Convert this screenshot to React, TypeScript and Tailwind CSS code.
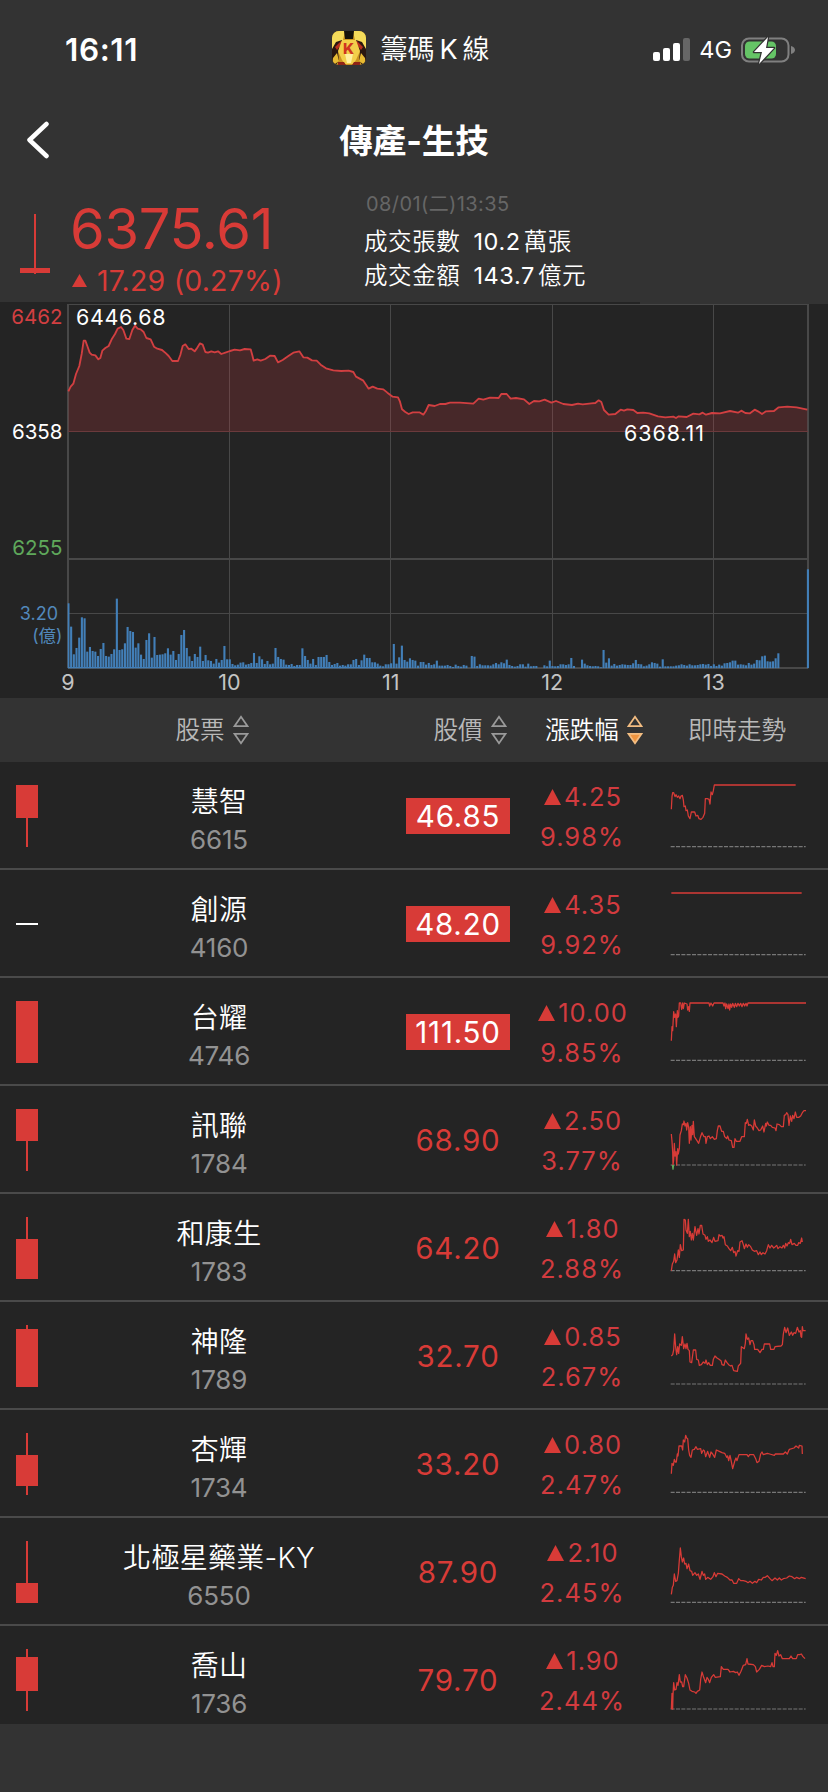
import React from 'react';

interface Candle {
  wick?: [number, number];
  body?: [number, number];
}

interface Stock {
  name: string;
  code: string;
  price: string;
  change: string;
  percent: string;
  limitUp?: boolean;
  candle: Candle;
  trend: {
    origin: [number, number];
    base: number;
    points: string;
    below?: string;
  };
}

const stocks: Stock[] = [
  {
    name: '慧智', code: '6615', price: '46.85', change: '4.25', percent: '9.98%', limitUp: true,
    candle: { body: [23, 56], wick: [56, 85] },
    trend: {
      origin: [804, 36], base: 290,
      points: '814,178 816,140 818,128 821,128 825,140 828,134 832,142 836,138 840,146 843,138 847,136 850,150 852,170 856,168 858,182 862,180 865,198 870,206 874,186 884,186 888,198 893,196 897,206 903,208 909,202 914,190 916,146 922,146 927,148 930,162 933,126 937,134 940,122 943,105 1187,105',
    },
  },
  {
    name: '創源', code: '4160', price: '48.20', change: '4.35', percent: '9.92%', limitUp: true,
    candle: {},
    trend: { origin: [804, 360], base: 614, points: '814,429 1205,429' },
  },
  {
    name: '台耀', code: '4746', price: '111.50', change: '10.00', percent: '9.85%', limitUp: true,
    candle: { body: [23, 85] },
    trend: {
      origin: [804, 684], base: 931,
      points: '814,872 816,830 818,842 821,785 824,802 827,792 829,830 832,782 834,802 836,798 838,759 842,759 845,778 848,759 850,776 853,759 861,762 863,780 866,770 868,784 870,759 927,759 929,768 933,759 938,768 942,759 969,759 972,768 975,759 977,776 980,762 984,776 987,762 989,780 992,762 995,772 998,760 1003,772 1006,760 1010,770 1014,760 1018,768 1022,760 1026,770 1030,760 1034,768 1038,760 1041,768 1044,759 1218,759',
    },
  },
  {
    name: '訊聯', code: '1784', price: '68.90', change: '2.50', percent: '3.77%',
    candle: { body: [23, 55], wick: [55, 85] },
    trend: {
      origin: [84, 18], base: 255, below: '97,255 99,269 101,255',
      points: '94,162 96,184 98,215 99,255 101,240 103,190 105,228 108,215 110,255 113,206 115,222 118,206 120,165 124,152 127,132 130,134 132,123 135,138 138,130 140,150 143,128 146,142 148,190 151,140 153,180 156,136 158,164 160,124 163,170 167,176 171,182 176,190 181,172 186,158 192,170 196,170 198,190 202,170 207,168 211,176 217,170 223,178 229,176 232,152 235,138 240,138 245,154 250,154 254,170 260,176 263,168 267,180 274,182 278,202 282,202 285,176 289,184 300,184 305,170 313,170 316,128 319,130 322,118 326,136 330,134 335,138 340,150 343,120 347,138 352,144 357,152 362,150 368,138 372,156 377,130 379,138 382,126 387,136 392,136 397,142 405,144 408,152 411,132 418,134 424,140 430,140 433,106 437,104 440,98 444,104 447,136 451,108 455,124 458,106 462,116 466,96 470,112 477,112 482,108 487,98 492,92 498,92',
    },
  },
  {
    name: '和康生', code: '1783', price: '64.20', change: '1.80', percent: '2.88%',
    candle: { body: [45, 85], wick: [23, 45] },
    trend: {
      origin: [84, 342], base: 572,
      points: '94,572 97,552 101,544 104,522 107,548 111,540 115,510 118,532 121,494 125,512 130,510 132,418 136,420 138,450 142,460 145,418 148,470 151,454 154,480 157,460 160,480 165,440 170,466 174,446 177,462 181,436 185,436 189,462 195,466 198,478 202,470 205,484 210,480 216,488 221,472 225,484 234,482 237,464 241,468 246,466 249,474 252,470 256,494 262,498 267,506 272,512 277,502 281,518 285,514 288,528 293,512 297,514 300,486 306,482 310,494 313,506 318,492 322,502 326,494 332,500 337,510 343,514 350,512 355,524 360,516 364,524 369,518 375,522 380,512 385,494 390,504 395,496 401,504 406,500 410,496 414,506 420,500 426,504 430,496 434,504 437,490 441,498 445,488 449,490 452,478 456,494 463,490 468,496 473,496 476,488 481,490 485,474 487,486',
    },
  },
  {
    name: '神隆', code: '1789', price: '32.70', change: '0.85', percent: '2.67%',
    candle: { body: [27, 85], wick: [23, 27] },
    trend: {
      origin: [84, 666], base: 912,
      points: '94,828 98,824 101,810 104,762 107,802 110,824 113,800 116,820 119,792 124,796 127,770 131,806 135,792 138,806 141,790 144,808 148,812 150,846 155,848 160,810 167,810 170,838 175,840 178,856 184,854 190,846 195,850 198,840 202,854 206,848 211,856 217,856 220,838 225,828 231,834 237,838 243,842 246,854 252,856 256,840 261,848 266,854 272,858 276,856 281,872 292,874 295,858 302,850 304,800 313,806 316,790 318,762 322,778 326,774 330,794 333,782 338,782 342,794 344,808 353,808 360,818 366,808 370,808 373,792 389,792 392,808 402,808 405,800 423,798 427,794 430,762 434,742 438,758 443,744 448,766 454,756 458,766 462,758 467,760 472,742 477,756 481,752 483,770 485,772 487,740 489,752 497,752',
    },
  },
  {
    name: '杏輝', code: '1734', price: '33.20', change: '0.80', percent: '2.47%',
    candle: { body: [45, 76], wick: [23, 85] },
    trend: {
      origin: [84, 30], base: 277,
      points: '94,221 96,190 100,196 103,178 106,186 109,186 112,162 114,168 117,138 125,138 128,150 130,120 134,126 137,106 140,114 143,116 146,150 149,166 153,172 157,150 163,148 168,140 172,148 182,146 185,160 190,150 193,152 197,170 203,154 209,172 213,156 218,162 224,172 229,150 238,154 246,158 254,160 260,172 263,168 266,182 270,166 273,180 278,206 284,184 288,174 291,182 297,164 321,164 325,170 329,164 341,164 347,176 351,188 357,184 362,162 366,156 370,164 382,160 389,162 403,166 406,162 430,162 436,156 442,162 448,148 462,144 468,138 476,144 478,136 486,138 487,162',
    },
  },
  {
    name: '北極星藥業-KY', code: '6550', price: '87.90', change: '2.10', percent: '2.45%',
    candle: { body: [65, 85], wick: [23, 65] },
    trend: {
      origin: [84, 354], base: 607,
      points: '94,583 97,562 100,556 103,522 107,544 111,542 115,520 118,480 121,444 124,470 127,486 131,474 134,492 138,490 141,506 146,492 150,512 155,514 158,526 165,518 170,526 175,522 180,538 186,514 190,526 194,522 197,538 203,532 212,538 219,530 223,518 228,530 233,520 246,522 254,528 262,532 270,540 276,540 281,550 290,550 296,536 302,542 310,542 318,544 324,548 330,544 337,550 345,544 350,548 356,538 364,540 370,532 376,532 382,527 390,536 396,542 405,534 412,540 418,534 424,540 430,536 440,534 448,528 456,530 464,536 470,532 478,536 484,532 497,536',
    },
  },
  {
    name: '喬山', code: '1736', price: '79.70', change: '1.90', percent: '2.44%',
    candle: { body: [31, 65], wick: [23, 85] },
    trend: {
      origin: [84, 678], base: 927,
      points: '94,928 96,880 98,928 99,886 101,848 104,870 108,868 111,848 114,856 118,824 121,846 125,846 128,860 131,860 136,824 141,834 146,850 150,870 156,874 164,876 168,880 172,874 179,870 182,838 186,816 191,832 197,848 201,832 205,838 209,848 214,832 221,824 226,832 241,830 244,800 250,808 264,808 270,816 280,814 287,818 292,816 297,826 303,814 310,796 317,794 321,776 324,792 340,794 346,800 350,816 358,808 365,796 373,800 384,798 392,800 396,788 399,800 403,800 405,760 409,766 413,752 417,768 422,764 427,776 448,776 453,768 458,776 469,776 473,764 479,764 484,762 489,770 495,776',
    },
  },
];

// Index line, plotted at three units per pixel
const indexLine =
  '205,304 212,290 220,281 228,252 238,228 245,192 251,152 256,152 262,168 269,188 275,194 286,196 295,208 301,204 307,182 316,174 326,168 336,146 345,132 353,116 363,111 370,120 379,146 388,147 397,120 405,107 413,116 422,118 431,126 439,144 452,148 462,170 472,176 486,180 498,190 506,198 517,213 534,213 541,195 548,168 556,163 566,177 574,176 584,184 590,176 600,160 608,164 616,186 624,188 634,184 644,187 654,184 664,192 676,188 690,183 704,179 720,181 734,177 752,178 757,196 761,212 772,208 782,212 796,207 810,197 824,198 834,217 848,210 864,199 880,188 898,184 910,202 922,203 936,211 950,212 962,224 978,235 1000,241 1024,243 1046,242 1060,246 1068,260 1090,272 1106,296 1118,290 1132,296 1150,298 1162,308 1178,320 1194,322 1200,335 1206,358 1216,366 1226,372 1238,367 1258,367 1270,374 1278,362 1286,345 1304,348 1320,342 1336,342 1350,338 1380,338 1420,341 1436,326 1450,329 1470,323 1496,324 1504,312 1520,312 1532,326 1548,324 1572,328 1588,342 1602,333 1618,334 1634,329 1654,338 1668,333 1690,342 1716,345 1734,341 1748,343 1774,340 1786,339 1796,331 1804,336 1812,360 1826,374 1846,372 1862,359 1872,362 1882,358 1900,360 1912,369 1930,368 1948,370 1974,379 1996,382 2020,380 2028,384 2036,379 2060,381 2080,371 2098,373 2108,368 2118,374 2136,369 2160,370 2190,363 2214,368 2224,362 2236,369 2250,370 2264,359 2274,364 2286,372 2298,364 2322,363 2336,352 2362,350 2390,352 2422,359';

// Turnover per minute from 09:00
const volumes = [
  195, 125, 42, 61, 92, 153, 150, 50, 64, 52, 50, 37, 58, 76, 37, 35, 43, 57, 209, 55, 57, 75, 124, 112, 109, 62, 75, 41, 28, 85,
  105, 32, 94, 40, 41, 42, 45, 60, 41, 52, 25, 43, 100, 115, 61, 36, 22, 43, 34, 65, 22, 40, 24, 22, 14, 28, 17, 25, 67, 27,
  27, 13, 9, 11, 17, 18, 11, 13, 16, 46, 16, 36, 27, 13, 22, 12, 14, 61, 34, 28, 26, 11, 10, 13, 7, 10, 10, 60, 37, 25,
  14, 28, 10, 34, 34, 34, 40, 19, 10, 13, 16, 8, 10, 8, 12, 12, 25, 28, 10, 24, 41, 31, 31, 18, 18, 14, 8, 6, 12, 12,
  15, 73, 14, 33, 68, 25, 20, 30, 25, 23, 8, 19, 19, 11, 16, 10, 12, 23, 8, 8, 8, 10, 7, 4, 11, 7, 5, 10, 8, 0,
  37, 35, 7, 12, 9, 9, 9, 8, 12, 16, 12, 18, 15, 26, 10, 7, 5, 7, 12, 12, 5, 14, 6, 7, 7, 0, 0, 9, 6, 23,
  7, 6, 7, 12, 12, 10, 12, 31, 7, 0, 0, 26, 14, 9, 7, 6, 7, 6, 3, 55, 17, 30, 8, 13, 8, 10, 12, 11, 10, 10,
  15, 25, 13, 12, 6, 8, 12, 18, 16, 14, 5, 27, 6, 6, 6, 6, 8, 9, 12, 10, 8, 12, 9, 9, 10, 12, 13, 11, 13, 7,
  12, 7, 11, 8, 15, 16, 18, 23, 23, 11, 12, 11, 9, 16, 11, 14, 25, 24, 36, 38, 21, 20, 21, 30, 45, 0, 0, 0, 0, 0,
  0, 0, 0, 0, 0, 297,
];

const hours = [
  { label: '9', x: 68 },
  { label: '10', x: 229.3 },
  { label: '11', x: 390.7 },
  { label: '12', x: 552.3 },
  { label: '13', x: 713.7 },
];

const StatusBar = () => (
  <div className="grid h-24 grid-cols-3 items-center">
    <div className="pt-1 pl-[65px] text-[31.500px] font-semibold tracking-[0.6px]">16:11</div>
    <div className="flex items-center justify-center gap-3.5 pr-[6px]">
      <svg width="34" height="34" viewBox="0 0 34 34">
        <defs>
          <clipPath id="app-icon">
            <rect width="34" height="34" rx="7" />
          </clipPath>
        </defs>
        <g clipPath="url(#app-icon)">
          <rect width="34" height="34" fill="#c9931f" />
          <path d="M0 0h13l-2 9-6 5-5 5z" fill="#f5dc5a" />
          <path d="M34 0H21l2 9 6 5 5 5z" fill="#f5dc5a" />
          <path d="M12 0h10l-1 8h-8z" fill="#15130c" />
          <path d="M0 18l4-7 6-2 1 4-5 8 1 8-3 5H0z" fill="#2a1710" />
          <path d="M34 18l-4-7-6-2-1 4 5 8-1 8 3 5h4z" fill="#2a1710" />
          <path d="M3 16l6-6 2 1-6 8zM31 16l-6-6-2 1 6 8z" fill="#b8301e" />
          <path d="M10 9h14l4 11-4 9-3 4h-8l-3-4-4-9z" fill="#f3cf4a" />
          <path d="M13 23h8l-2 9h-4z" fill="#fff0a0" />
          <path d="M1 27l4-5 2 8-4 3H1zM33 27l-4-5-2 8 4 3h2z" fill="#e8bb33" />
          <path d="M6 31h6l2 3H6zM28 31h-6l-2 3h8z" fill="#8f2417" />
          <text x="16.500" y="22.500" textAnchor="middle" fontSize="15" fontWeight="800" fill="#cf3420">K</text>
        </g>
      </svg>
      <div className="flex items-center gap-[5px] pt-[3px] text-[27px] leading-[36px]">
        <span className="font-[350]">籌碼</span>
        <span>K</span>
        <span className="font-[350]">線</span>
      </div>
    </div>
    <div className="flex items-center justify-end gap-[9px] pt-[3px] pr-[33px]">
      <svg width="37" height="24" viewBox="0 0 37 24" fill="#fff">
        <rect y="14" width="7" height="9" rx="2" />
        <rect x="10" y="10" width="7" height="13" rx="2" />
        <rect x="20" y="5" width="7" height="18" rx="2" />
        <rect x="30" width="7" height="23" rx="2" fill="#666" />
      </svg>
      <span className="pt-px text-[23.500px]">4G</span>
      <svg width="54" height="28" viewBox="0 0 54 28">
        <rect x="1" y="2.500" width="46.500" height="23" rx="7" fill="none" stroke="#808080" strokeWidth="2" />
        <path d="M50 10v8c3-1 4-2.500 4-4s-1-3-4-4z" fill="#808080" />
        <rect x="4" y="5.500" width="31" height="17" rx="4.500" fill="#65c466" />
        <path d="M27 1L13 16h8l-3 12 15-16h-8z" fill="#fff" stroke="#333" strokeWidth="2.500" strokeLinejoin="round" paintOrder="stroke" />
      </svg>
    </div>
  </div>
);

const TitleBar = () => (
  <div className="grid h-[88px] grid-cols-3 items-center">
    <svg width="26" height="38" viewBox="0 0 26 38" className="ml-[25px]" fill="none" stroke="#fff" strokeWidth="4.500" strokeLinecap="round" strokeLinejoin="round">
      <path d="M21.500 3L4.500 19l17 16" />
    </svg>
    <h1 className="pt-[2px] text-center text-[33.500px] font-bold whitespace-nowrap">傳產-生技</h1>
  </div>
);

const Summary = () => (
  <div className="flex h-[120px]">
    <svg width="30" height="62" viewBox="0 0 30 62" className="mt-[29px] ml-5" fill="#d83b37">
      <rect x="14" y="1" width="2" height="60" />
      <rect y="55" width="30" height="5" />
    </svg>
    <div className="w-[314px] pt-[10px] pl-5 text-[#d83b37]">
      <div className="text-[56px] leading-[70px] tracking-[-0.3px]">6375.61</div>
      <div className="flex items-center leading-[33px]">
        <svg width="15" height="13" viewBox="0 0 15 13" fill="currentColor" className="ml-[2px]">
          <path d="M7.500 0L15 13H0z" />
        </svg>
        <span className="pl-[10px] text-[28.500px] tracking-[0.2px] whitespace-nowrap">17.29 (0.27%)</span>
      </div>
    </div>
    <div className="pt-[4px] text-[23.500px] tracking-[0.6px]">
      <div className="pl-[2px] text-[20px] leading-[32px] tracking-[0.4px] text-[#666]">08/01(二)13:35</div>
      <div className="flex gap-[13px] pt-[5px] leading-[34px]">
        <span className="font-[350]">成交張數</span>
        <span className="flex gap-[3px]">
          <span>10.2</span>
          <span className="font-[350]">萬張</span>
        </span>
      </div>
      <div className="flex gap-[13px] leading-[34px]">
        <span className="font-[350]">成交金額</span>
        <span className="flex gap-[3px]">
          <span>143.7</span>
          <span className="font-[350]">億元</span>
        </span>
      </div>
    </div>
  </div>
);

const IndexChart = () => (
  <svg width="828" height="396" viewBox="0 302 828 396" className="block">
    <defs>
      <clipPath id="plot">
        <rect x="67.500" y="303" width="741.500" height="365.500" />
      </clipPath>
    </defs>
    <rect x="0" y="302" width="828" height="396" fill="#242424" />
    <rect x="640" y="302" width="188" height="2" fill="#333" />
    <g fill="#484848">
      <rect x="68" y="304" width="740" height="1" />
      <rect x="68" y="431" width="740" height="1" />
      <rect x="68" y="558" width="740" height="2" />
      <rect x="68" y="613" width="740" height="1" />
      <rect x="68" y="667" width="740" height="2" />
      <rect x="67" y="304" width="2" height="364" />
      <rect x="229" y="304" width="1" height="364" />
      <rect x="390" y="304" width="1" height="364" />
      <rect x="552" y="304" width="1" height="364" />
      <rect x="713" y="304" width="1" height="364" />
      <rect x="807" y="304" width="2" height="364" />
    </g>
    <g transform="translate(0 290) scale(0.33333)">
      <polygon points={`205,424 ${indexLine} 2422,424`} fill="#d83b3f" fillOpacity="0.2" />
      <polyline points={indexLine} fill="none" stroke="#d23f41" strokeWidth="5.500" strokeLinejoin="round" />
    </g>
    <rect x="68" y="431" width="740" height="1" fill="#6b3a3c" />
    <g clipPath="url(#plot)" fill="#427fb8">
      <rect x="68" y="667" width="312" height="1.500" />
      {volumes.map((v, i) => (
        <rect key={i} x={67.4 + i * 2.689} y={668.3 - v / 3} width="2.1" height={v / 3} />
      ))}
    </g>
    <g fontSize="20.500" fill="#fff" textAnchor="end">
      <text x="62.500" y="323.500" fill="#d23f41">6462</text>
      <text x="62.500" y="438.500">6358</text>
      <text x="62.500" y="554.500" fill="#5fa85b">6255</text>
      <text x="58" y="619.500" fontSize="18" fill="#5288bb">3.20</text>
      <text x="62.500" y="642" fontSize="17.500" fill="#5288bb">(億)</text>
    </g>
    <g fontSize="21.500" fill="#fff" letterSpacing="0.6">
      <text x="76" y="324.500">6446.68</text>
      <text x="624" y="440.500" letterSpacing="0.9">6368.11</text>
    </g>
    <g fontSize="21.500" fill="#c4c4c4" textAnchor="middle">
      {hours.map((h) => (
        <text key={h.label} x={h.x} y="689.500">{h.label}</text>
      ))}
    </g>
  </svg>
);

const SortIcon = ({ active = false }: { active?: boolean }) => (
  <svg width="16" height="30" viewBox="0 0 16 30" fill="none" stroke={active ? '#f3bd82' : '#9a9a9a'} strokeWidth="1.700">
    <path d="M8 1.800L14.500 11.200h-13z" />
    <path d="M8 28.200L14.500 18.800h-13z" fill={active ? '#ef9440' : 'none'} />
  </svg>
);

const TableHeader = () => (
  <div className="flex h-16 items-center text-[24.500px] font-[350] text-[#b9b9b9]">
    <div className="flex w-[424px] items-center justify-center gap-2">
      <span>股票</span>
      <SortIcon />
    </div>
    <div className="flex w-[92px] items-center justify-center gap-2">
      <span className="whitespace-nowrap">股價</span>
      <SortIcon />
    </div>
    <div className="flex w-[156px] items-center justify-center gap-2 text-white">
      <span>漲跌幅</span>
      <SortIcon active />
    </div>
    <div className="w-[130px] text-center">即時走勢</div>
  </div>
);

const CandleIcon = ({ wick, body }: Candle) => (
  <svg width="22" height="106" viewBox="0 0 22 106" fill="#d83b37">
    {!wick && !body && <rect y="53" width="22" height="2" fill="#fff" />}
    {wick && <rect x="10" y={wick[0]} width="2" height={wick[1] - wick[0]} />}
    {body && <rect y={body[0]} width="22" height={body[1] - body[0]} />}
  </svg>
);

const Trend = ({ origin, base, points, below }: Stock['trend']) => (
  <svg width="141" height="106" viewBox={`${origin[0]} ${origin[1]} 423 318`} fill="none" className="ml-9">
    <path d={`M${origin[0] + 8} ${base}h405`} stroke="#777" strokeWidth="3.500" strokeDasharray="12 4" />
    <polyline points={points} stroke="#d83b37" strokeWidth="3.800" strokeLinejoin="round" />
    {below && <polyline points={below} stroke="#5fa85b" strokeWidth="3.500" />}
  </svg>
);

const StockRow = ({ stock }: { stock: Stock }) => (
  <div className="flex h-[108px] shrink-0 border-b-2 border-[#4a4a4a]">
    <div className="w-[54px] pl-4">
      <CandleIcon {...stock.candle} />
    </div>
    <div className="w-[330px] pt-5 text-center">
      <div className="text-[28px] leading-[40px] font-[350] tracking-[0.3px]">{stock.name}</div>
      <div className="text-[26px] leading-[35px] tracking-[-0.2px] text-[#929292]">{stock.code}</div>
    </div>
    <div className="flex w-[148px] justify-center pt-9 text-[29.500px] leading-[37px] tracking-[0.8px]">
      {stock.limitUp ? (
        <div className="h-9 w-[104px] bg-[#d83b37] text-center text-white">{stock.price}</div>
      ) : (
        <div className="text-[#d83b37]">{stock.price}</div>
      )}
    </div>
    <div className="flex w-[100px] flex-col items-center pt-[15px] text-[25.500px] leading-[40px] tracking-[1px] text-[#d23b3f]">
      <div className="flex items-center gap-[3px] pl-[2px]">
        <svg width="17" height="16" viewBox="0 0 17 16" fill="#d83b37">
          <path d="M8.500 0L17 16H0z" />
        </svg>
        <span>{stock.change}</span>
      </div>
      <div>{stock.percent}</div>
    </div>
    <Trend {...stock.trend} />
  </div>
);

const App: React.FC = () => {
  return (
    <div className="flex h-[1792px] w-[828px] flex-col overflow-hidden bg-[#333] font-['Inter','Noto_Sans_CJK_TC',sans-serif] text-white">
      {/* Header */}
      <StatusBar />
      <TitleBar />
      <Summary />

      {/* Intraday chart */}
      <div className="-mt-[2px]">
        <IndexChart />
      </div>

      {/* Stock list */}
      <TableHeader />
      <div className="flex h-[962px] flex-col overflow-hidden bg-[#242424]">
        {stocks.map((stock) => (
          <StockRow key={stock.code} stock={stock} />
        ))}
      </div>
    </div>
  );
};

export default App;
